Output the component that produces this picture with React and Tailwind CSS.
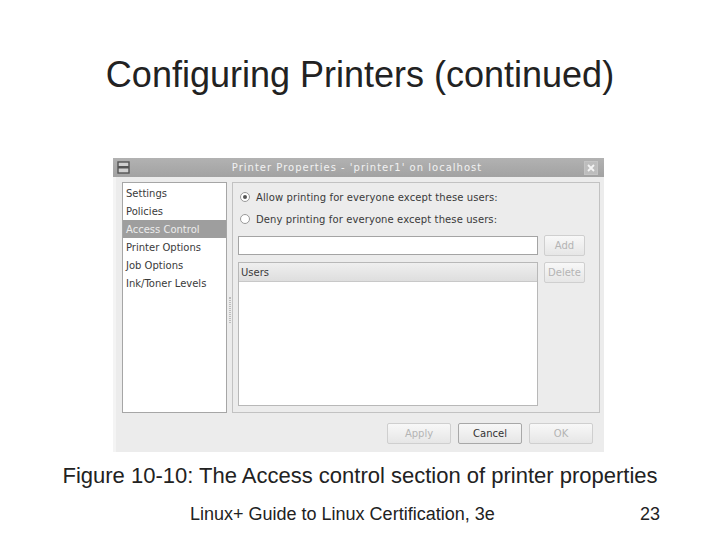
const GTK = { fontFamily: '"DejaVu Sans", Verdana, sans-serif' }

const PAGES = ['Settings', 'Policies', 'Access Control', 'Printer Options', 'Job Options', 'Ink/Toner Levels']

function Radio({ checked }) {
  return (
    <span className="w-[10px] h-[10px] rounded-full border border-[#9a9a9a] bg-white flex items-center justify-center shrink-0">
      {checked && <span className="w-[4px] h-[4px] rounded-full bg-[#555]" />}
    </span>
  )
}

function GtkButton({ label, disabled, className = '' }) {
  return (
    <div
      className={
        'flex items-center justify-center rounded-[2px] border text-[10px] bg-gradient-to-b from-[#f8f8f8] to-[#e6e6e6] ' +
        (disabled ? 'border-[#cfcfcf] text-[#b4b4b4] ' : 'border-[#a8a8a8] text-[#333] ') +
        className
      }
    >
      {label}
    </div>
  )
}

function Window() {
  return (
    <div className="ml-[113px] w-[491px] h-[294px] flex flex-col bg-[#ececec] border-l-[3px] border-[#f4f4f4]" style={GTK}>
      {/* title bar */}
      <div className="h-[19px] flex items-center bg-gradient-to-b from-[#b2b2b2] to-[#a2a2a2] -ml-[3px]">
        <div className="ml-[3px] w-[14px] h-[14px] flex items-center justify-center">
          <svg width="13" height="13" viewBox="0 0 13 13">
            <rect x="1" y="1" width="11" height="11" fill="#d0d0d0" stroke="#555" strokeWidth="1.4" />
            <rect x="1" y="5" width="11" height="2.5" fill="#555" />
          </svg>
        </div>
        <div className="flex-1 text-center text-[10px] tracking-[1px] text-[#f2f2f2]">
          Printer Properties - 'printer1' on localhost
        </div>
        <div className="mr-[6px] w-[14px] h-[14px] border border-[#c4c4c4] bg-[#bdbdbd] flex items-center justify-center">
          <svg width="8" height="8" viewBox="0 0 8 8">
            <path d="M1 1 L7 7 M7 1 L1 7" stroke="#f4f4f4" strokeWidth="1.8" />
          </svg>
        </div>
      </div>

      {/* body */}
      <div className="flex pt-[5px] pl-[6px]">
        <div className="w-[105px] h-[231px] bg-white border border-[#a6a6a6] pt-[1px]">
          {PAGES.map((p) => (
            <div
              key={p}
              className={
                'h-[18px] flex items-center pl-[3px] text-[10px] ' +
                (p === 'Access Control' ? 'bg-[#9e9e9e] text-[#ececec]' : 'text-[#3a3a3a]')
              }
            >
              {p}
            </div>
          ))}
        </div>
        <div className="w-[5px] h-[231px] flex items-center justify-center">
          <div className="w-[2px] h-[26px] mt-[24px] border-x border-dotted border-[#bcbcbc]" />
        </div>
        <div className="w-[368px] h-[231px] border border-[#c2c2c2] flex flex-col pl-[5px] pt-[5px]">
          <div className="h-[18px] flex items-center gap-[6px] ml-[2px] text-[10px] tracking-[0.1px] text-[#3a3a3a]">
            <Radio checked />
            Allow printing for everyone except these users:
          </div>
          <div className="h-[18px] mt-[4px] flex items-center gap-[6px] ml-[2px] text-[10px] tracking-[0.1px] text-[#3a3a3a]">
            <Radio />
            Deny printing for everyone except these users:
          </div>
          <div className="flex items-center gap-[6px] mt-[7px]">
            <div className="w-[300px] h-[19px] bg-white border border-[#a4a4a4]" />
            <GtkButton label="Add" disabled className="w-[41px] h-[21px]" />
          </div>
          <div className="flex items-start gap-[6px] mt-[6px]">
            <div className="w-[300px] h-[144px] bg-white border border-[#b8b8b8]">
              <div className="h-[19px] flex items-center pl-[2px] text-[10px] text-[#3a3a3a] bg-gradient-to-b from-[#efefef] to-[#dedede] border-b border-[#c8c8c8]">
                Users
              </div>
            </div>
            <GtkButton label="Delete" disabled className="w-[41px] h-[21px]" />
          </div>
        </div>
      </div>

      <div className="flex justify-end gap-[7px] mt-[10px] pr-[11px]">
        <GtkButton label="Apply" disabled className="w-[64px] h-[21px]" />
        <GtkButton label="Cancel" className="w-[64px] h-[21px]" />
        <GtkButton label="OK" disabled className="w-[64px] h-[21px]" />
      </div>
    </div>
  )
}

export default function App() {
  return (
    <div
      className="w-[720px] h-[540px] bg-white flex flex-col text-[#222]"
      style={{ fontFamily: '"Liberation Sans", Arial, sans-serif' }}
    >
      <h1 className="mt-[55px] h-[40px] leading-[40px] text-[36px] text-center">Configuring Printers (continued)</h1>
      <div className="mt-[63px]">
        <Window />
      </div>
      <p className="mt-[10px] h-[28px] leading-[28px] text-[22px] text-center">
        Figure 10-10: The Access control section of printer properties
      </p>
      <div className="mt-[14px] h-[20px] flex items-center text-[18px]">
        <span className="ml-[190px]">Linux+ Guide to Linux Certification, 3e</span>
        <span className="ml-auto mr-[60px]">23</span>
      </div>
    </div>
  )
}
